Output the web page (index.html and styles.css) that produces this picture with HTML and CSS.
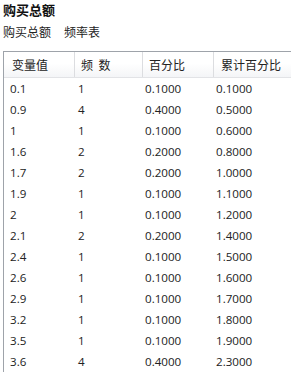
FILE: index.html
```html
<!DOCTYPE html>
<html>
<head>
<meta charset="utf-8">
<link rel="stylesheet" href="styles.css">
</head>
<body>
<div class="title">购买总额</div>
<div class="subtitle"><span>购买总额</span><span>频率表</span></div>
<div class="table">
  <div class="row head">
    <div class="c c1">变量值</div>
    <div class="c c2">频&nbsp;&nbsp;数</div>
    <div class="c c3">百分比</div>
    <div class="c c4">累计百分比</div>
  </div>
  <div class="row"><div class="c c1">0.1</div><div class="c c2">1</div><div class="c c3">0.1000</div><div class="c c4">0.1000</div></div>
  <div class="row"><div class="c c1">0.9</div><div class="c c2">4</div><div class="c c3">0.4000</div><div class="c c4">0.5000</div></div>
  <div class="row"><div class="c c1">1</div><div class="c c2">1</div><div class="c c3">0.1000</div><div class="c c4">0.6000</div></div>
  <div class="row"><div class="c c1">1.6</div><div class="c c2">2</div><div class="c c3">0.2000</div><div class="c c4">0.8000</div></div>
  <div class="row"><div class="c c1">1.7</div><div class="c c2">2</div><div class="c c3">0.2000</div><div class="c c4">1.0000</div></div>
  <div class="row"><div class="c c1">1.9</div><div class="c c2">1</div><div class="c c3">0.1000</div><div class="c c4">1.1000</div></div>
  <div class="row"><div class="c c1">2</div><div class="c c2">1</div><div class="c c3">0.1000</div><div class="c c4">1.2000</div></div>
  <div class="row"><div class="c c1">2.1</div><div class="c c2">2</div><div class="c c3">0.2000</div><div class="c c4">1.4000</div></div>
  <div class="row"><div class="c c1">2.4</div><div class="c c2">1</div><div class="c c3">0.1000</div><div class="c c4">1.5000</div></div>
  <div class="row"><div class="c c1">2.6</div><div class="c c2">1</div><div class="c c3">0.1000</div><div class="c c4">1.6000</div></div>
  <div class="row"><div class="c c1">2.9</div><div class="c c2">1</div><div class="c c3">0.1000</div><div class="c c4">1.7000</div></div>
  <div class="row"><div class="c c1">3.2</div><div class="c c2">1</div><div class="c c3">0.1000</div><div class="c c4">1.8000</div></div>
  <div class="row"><div class="c c1">3.5</div><div class="c c2">1</div><div class="c c3">0.1000</div><div class="c c4">1.9000</div></div>
  <div class="row"><div class="c c1">3.6</div><div class="c c2">4</div><div class="c c3">0.4000</div><div class="c c4">2.3000</div></div>
</div>
</body>
</html>
```
FILE: styles.css
```css
html, body {
  margin: 0;
  padding: 0;
  background: #ffffff;
  overflow: hidden;
}
body {
  font-family: "Open Sans", "Noto Sans CJK SC", sans-serif;
  font-size: 11.6px;
  color: #222;
  width: 291px;
  height: 372px;
}
.title {
  height: 18px;
  line-height: 19px;
  padding-left: 3px;
  font-weight: bold;
  font-size: 13px;
  font-family: "Noto Sans CJK SC", sans-serif;
  color: #111;
}
.subtitle {
  margin-top: 3px;
  height: 20px;
  line-height: 21px;
  padding-left: 3px;
  display: flex;
  gap: 13px;
  font-size: 12px;
  font-family: "Noto Sans CJK SC", sans-serif;
}
.table {
  margin-top: 10px;
  margin-left: 3px;
  border-top: 1px solid #9ea3aa;
  border-left: 1px solid #9ea3aa;
}
.row {
  display: grid;
  grid-template-columns: 71px 68px 71px 1fr;
  height: 21px;
  line-height: 21px;
}
.row.head {
  height: 25px;
  line-height: 25px;
  font-size: 12px;
  background: linear-gradient(#ffffff, #ffffff 45%, #f4f5f7);
  border-bottom: 1px solid #e2e3e6;
  font-family: "Noto Sans CJK SC", sans-serif;
}
.head .c {
  border-right: 1px solid #dcdde0;
}
.head .c4 { border-right: none; }
.c { white-space: nowrap; overflow: hidden; }
.c1 { padding-left: 6px; }
.c2 { padding-left: 3px; }
.c3 { padding-left: 2px; }
.c4 { padding-left: 2px; }
.head .c1 { padding-left: 8px; }
.head .c2 { padding-left: 6px; }
.head .c3 { padding-left: 6px; }
.head .c4 { padding-left: 7px; }
```
